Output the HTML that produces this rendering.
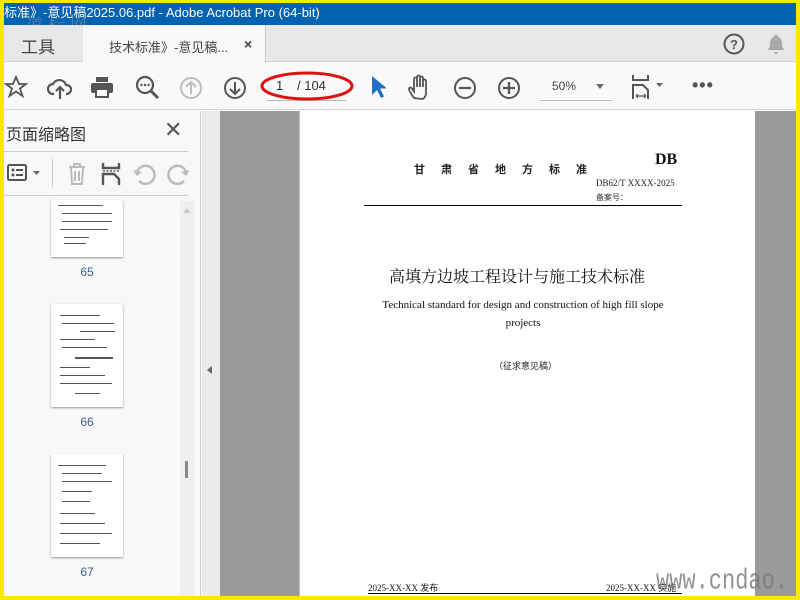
<!DOCTYPE html>
<html><head><meta charset="utf-8"><style>
*{margin:0;padding:0;box-sizing:border-box}
body{width:800px;height:600px;overflow:hidden;background:#fbe800;position:relative;font-family:"Liberation Sans","Noto Sans CJK SC",sans-serif}
.a{position:absolute}
.thumb{position:absolute;left:47px;width:72px;background:#fff;box-shadow:0 1px 2px rgba(0,0,0,.4)}
.ln{position:absolute;height:1px;background:#555}
.lbl{position:absolute;left:47px;width:72px;text-align:center;font-size:12px;color:#3a5f8f}
svg{position:absolute}
</style></head><body>
<div class="a" style="left:4px;top:3px;width:792px;height:593px;background:#f8f8f8;overflow:hidden">
 <div class="a" style="left:0;top:0;width:792px;height:22px;background:#0063b1;color:#fff;font-size:13px;line-height:20px;white-space:nowrap">标准》-意见稿2025.06.pdf - Adobe Acrobat Pro (64-bit)</div>
 <div class="a" style="left:22px;top:8px;font-size:17px;color:rgba(140,140,160,.7);font-family:'Noto Serif CJK SC',serif;letter-spacing:5px">道标网</div>
 <div class="a" style="left:0;top:22px;width:792px;height:37px;background:#e8e8e8;border-bottom:1px solid #cfcfcf"></div>
 <div class="a" style="left:17px;top:30px;font-size:17px;color:#444">工具</div>
 <div class="a" style="left:79px;top:22px;width:183px;height:38px;background:#f8f8f8;border-right:1px solid #ccc"></div>
 <div class="a" style="left:105px;top:34px;font-size:13px;color:#444">技术标准》-意见稿...</div>
 <div class="a" style="left:240px;top:33px;font-size:14px;color:#444;font-weight:bold">×</div>
 <svg style="left:719px;top:30px" width="22" height="22"><circle cx="11" cy="11" r="9.5" fill="none" stroke="#555" stroke-width="2"/><text x="11" y="16" font-size="13" text-anchor="middle" fill="#555" font-weight="bold" font-family="Liberation Sans">?</text></svg>
 <svg style="left:762px;top:30px" width="20" height="24"><path d="M10 2a2 2 0 0 1 2 2c4 1 4 5 4 9l2 4H2l2-4c0-4 0-8 4-9a2 2 0 0 1 2-2zM8 19h4a2 2 0 0 1-4 0z" fill="#aaa"/></svg>
 <div class="a" style="left:0;top:60px;width:792px;height:47px;background:#f9f9f9;border-bottom:1px solid #d6d6d6"></div>
 <svg style="left:0;top:72px" width="24" height="24"><path d="M12 2l3 7h7l-6 4.5 2.5 7.5L12 16.5 5.5 21 8 13.5 2 9h7z" fill="none" stroke="#555" stroke-width="1.8"/></svg>
 <svg style="left:43px;top:72px" width="26" height="26"><path d="M7 19H6a5 5 0 0 1 0-10 7 7 0 0 1 13 1 4.5 4.5 0 0 1 1 9h-1" fill="none" stroke="#555" stroke-width="2.2"/><path d="M13 24V12M9 16l4-4 4 4" fill="none" stroke="#555" stroke-width="2.2"/></svg>
 <svg style="left:86px;top:72px" width="24" height="24"><rect x="6" y="2" width="12" height="5" fill="#555"/><rect x="1" y="8" width="22" height="10" rx="2" fill="#555"/><rect x="6" y="14" width="12" height="8" fill="#fff" stroke="#555" stroke-width="2"/></svg>
 <svg style="left:131px;top:72px" width="26" height="26"><circle cx="10" cy="10" r="8" fill="none" stroke="#555" stroke-width="2.2"/><path d="M16 16l7 7" stroke="#555" stroke-width="3"/><circle cx="6.5" cy="10" r="1.2" fill="#555"/><circle cx="10" cy="10" r="1.2" fill="#555"/><circle cx="13.5" cy="10" r="1.2" fill="#555"/></svg>
 <svg style="left:175px;top:73px" width="24" height="24"><circle cx="12" cy="12" r="10" fill="none" stroke="#bbb" stroke-width="2"/><path d="M12 18V6M7 11l5-5 5 5" fill="none" stroke="#bbb" stroke-width="2"/></svg>
 <svg style="left:219px;top:73px" width="24" height="24"><circle cx="12" cy="12" r="10" fill="none" stroke="#555" stroke-width="2"/><path d="M12 6v12M7 13l5 5 5-5" fill="none" stroke="#555" stroke-width="2"/></svg>
 <div class="a" style="left:272px;top:75px;font-size:13px;color:#333">1</div>
 <div class="a" style="left:293px;top:75px;font-size:13px;color:#333">/ 104</div>
 <div class="a" style="left:262px;top:97px;width:80px;height:1px;background:#bbb"></div>
 <svg style="left:255px;top:66px" width="100" height="36"><ellipse cx="48" cy="17" rx="45" ry="13" fill="none" stroke="#d11" stroke-width="3"/></svg>
 <svg style="left:366px;top:72px" width="16" height="24"><path d="M2 1v19l5-5 4 8 3-1.5-4-8h7z" fill="#1f6fc5"/></svg>
 <svg style="left:404px;top:71px" width="26" height="28"><path d="M6 24c-2-3-5-7-5-9 0-1.5 2-2 3-.5l2 3V5a1.5 1.5 0 0 1 3 0v8-10a1.5 1.5 0 0 1 3 0v10-9a1.5 1.5 0 0 1 3 0v9-6a1.5 1.5 0 0 1 3 0v12c0 3-2 6-4 6z" fill="none" stroke="#555" stroke-width="1.8"/></svg>
 <svg style="left:449px;top:73px" width="24" height="24"><circle cx="12" cy="12" r="10" fill="none" stroke="#555" stroke-width="2"/><path d="M6 12h12" stroke="#555" stroke-width="2.2"/></svg>
 <svg style="left:493px;top:73px" width="24" height="24"><circle cx="12" cy="12" r="10" fill="none" stroke="#555" stroke-width="2"/><path d="M6 12h12M12 6v12" stroke="#555" stroke-width="2.2"/></svg>
 <div class="a" style="left:548px;top:76px;font-size:12px;color:#444">50%</div>
 <div class="a" style="left:536px;top:97px;width:72px;height:1px;background:#bbb"></div>
 <div class="a" style="left:592px;top:81px;border:4px solid transparent;border-top:5px solid #666"></div>
 <svg style="left:628px;top:72px" width="36" height="26"><path d="M1 0v5h15V0" fill="none" stroke="#555" stroke-width="2"/><path d="M1 24V10h10l5 5v9" fill="none" stroke="#555" stroke-width="2"/><path d="M4 21h10M4 21l2-2M4 21l2 2M14 21l-2-2M14 21l-2 2" stroke="#555" stroke-width="1.2"/><path d="M24 8h7l-3.5 4z" fill="#666"/></svg>
 <div class="a" style="left:688px;top:72px;font-size:18px;color:#555;letter-spacing:1px;font-weight:bold">•••</div>
 <div class="a" style="left:0;top:108px;width:197px;height:485px;background:#f8f8f8;border-right:1px solid #d0d0d0"></div>
 <div class="a" style="left:2px;top:118px;font-size:16px;color:#333">页面缩略图</div>
 <div class="a" style="left:160px;top:114px;font-size:22px;color:#555">✕</div>
 <div class="a" style="left:0;top:148px;width:184px;height:1px;background:#ccc"></div>
 <svg style="left:2px;top:158px" width="40" height="24"><rect x="2" y="4" width="18" height="15" rx="1.5" fill="none" stroke="#555" stroke-width="2"/><circle cx="7" cy="9" r="1.5" fill="#555"/><circle cx="7" cy="14" r="1.5" fill="#555"/><path d="M10 9h7M10 14h7" stroke="#555" stroke-width="2"/><path d="M27 10h7l-3.5 4z" fill="#666"/></svg>
 <div class="a" style="left:48px;top:156px;width:1px;height:28px;background:#ccc"></div>
 <svg style="left:61px;top:158px" width="24" height="26"><path d="M4 6h16M9 6V3h6v3M6 6l1 17h10l1-17M10 10v10M14 10v10" fill="none" stroke="#bbb" stroke-width="2"/></svg>
 <svg style="left:96px;top:158px" width="24" height="26"><path d="M3 2v5h16V2M3 24V13h11l5 5v6" fill="none" stroke="#555" stroke-width="2.4"/><path d="M3 10h16" stroke="#555" stroke-width="1.5" stroke-dasharray="2 1.5"/></svg>
 <svg style="left:128px;top:158px" width="26" height="26"><path d="M7 20a9 9 0 1 0-2-9" fill="none" stroke="#bbb" stroke-width="2.5"/><path d="M1 9l4 6 5-4z" fill="#bbb"/></svg>
 <svg style="left:161px;top:158px" width="26" height="26"><path d="M19 20a9 9 0 1 1 2-9" fill="none" stroke="#bbb" stroke-width="2.5"/><path d="M25 9l-4 6-5-4z" fill="#bbb"/></svg>
 <div class="a" style="left:0;top:192px;width:184px;height:1px;background:#ccc"></div>
 <div class="a" style="left:176px;top:198px;width:14px;height:395px;background:#efefef"></div>
 <div class="a" style="left:179px;top:205px;border:4px solid transparent;border-bottom:5px solid #ccc;border-top:0"></div>
 <div class="a" style="left:181px;top:458px;width:3px;height:17px;background:#888"></div>
 <div class="thumb" style="top:197px;height:57px"></div>
 <div class="lbl" style="top:262px">65</div>
 <div class="thumb" style="top:301px;height:103px"></div>
 <div class="lbl" style="top:412px">66</div>
 <div class="thumb" style="top:451px;height:103px"></div>
 <div class="lbl" style="top:562px">67</div>
 <div class="ln" style="left:54px;top:202px;width:45px"></div><div class="ln" style="left:58px;top:210px;width:50px"></div><div class="ln" style="left:58px;top:218px;width:50px"></div><div class="ln" style="left:56px;top:226px;width:48px"></div><div class="ln" style="left:60px;top:234px;width:25px"></div><div class="ln" style="left:60px;top:240px;width:22px"></div>
 <div class="ln" style="left:56px;top:312px;width:40px"></div><div class="ln" style="left:58px;top:320px;width:52px"></div><div class="ln" style="left:76px;top:328px;width:35px"></div><div class="ln" style="left:56px;top:336px;width:35px"></div><div class="ln" style="left:58px;top:344px;width:45px"></div><div class="ln" style="left:71px;top:354px;width:38px;height:2px"></div><div class="ln" style="left:56px;top:364px;width:30px"></div><div class="ln" style="left:56px;top:372px;width:45px"></div><div class="ln" style="left:56px;top:380px;width:52px"></div><div class="ln" style="left:71px;top:390px;width:25px"></div>
 <div class="ln" style="left:54px;top:462px;width:48px"></div><div class="ln" style="left:58px;top:470px;width:40px"></div><div class="ln" style="left:58px;top:478px;width:50px"></div><div class="ln" style="left:58px;top:488px;width:30px"></div><div class="ln" style="left:58px;top:498px;width:28px"></div><div class="ln" style="left:56px;top:510px;width:35px"></div><div class="ln" style="left:56px;top:520px;width:45px"></div><div class="ln" style="left:56px;top:530px;width:52px"></div><div class="ln" style="left:56px;top:540px;width:40px"></div>
 <div class="a" style="left:198px;top:108px;width:18px;height:485px;background:#ebebeb"></div>
 <div class="a" style="left:203px;top:363px;border:4px solid transparent;border-right:5px solid #666;border-left:0"></div>
 <div class="a" style="left:216px;top:108px;width:576px;height:485px;background:#9a9a9a"></div>
 <div class="a" style="left:295px;top:108px;width:456px;height:485px;background:#fff;border-left:1px solid #bbb"></div>
 <div class="a" style="left:410px;top:158px;font-size:11px;font-weight:bold;color:#222;letter-spacing:16px;font-family:'Noto Sans CJK SC',sans-serif">甘肃省地方标准</div>
 <div class="a" style="left:651px;top:148px;font-size:16px;font-weight:bold;color:#111;font-family:'Liberation Serif',serif">DB</div>
 <div class="a" style="left:592px;top:175px;font-size:9px;color:#222;font-family:'Liberation Serif',serif">DB62/T XXXX-2025</div>
 <div class="a" style="left:592px;top:189px;font-size:8px;color:#333">备案号：</div>
 <div class="a" style="left:360px;top:202px;width:318px;height:1px;background:#000"></div>
 <div class="a" style="left:385px;top:261px;font-size:16px;color:#111;font-family:'Noto Serif CJK SC',serif">高填方边坡工程设计与施工技术标准</div>
 <div class="a" style="left:360px;top:293px;width:318px;text-align:center;font-size:11px;line-height:18px;color:#111;font-family:'Liberation Serif',serif">Technical standard for design and construction of high fill slope projects</div>
 <div class="a" style="left:490px;top:356px;font-size:9px;color:#222">（征求意见稿）</div>
 <div class="a" style="left:364px;top:578px;font-size:9px;color:#111;font-family:'Liberation Serif','Noto Sans CJK SC',serif">2025-XX-XX 发布</div>
 <div class="a" style="left:602px;top:578px;font-size:9px;color:#111;font-family:'Liberation Serif','Noto Sans CJK SC',serif">2025-XX-XX 实施</div>
 <div class="a" style="left:364px;top:590px;width:314px;height:1px;background:#000"></div>
 <div class="a" style="left:652px;top:562px;font-size:22px;color:rgba(120,120,120,.8);font-family:'Liberation Mono',monospace;transform:scaleY(1.3);transform-origin:left top">www.cndao.</div>
</div>
</body></html>
